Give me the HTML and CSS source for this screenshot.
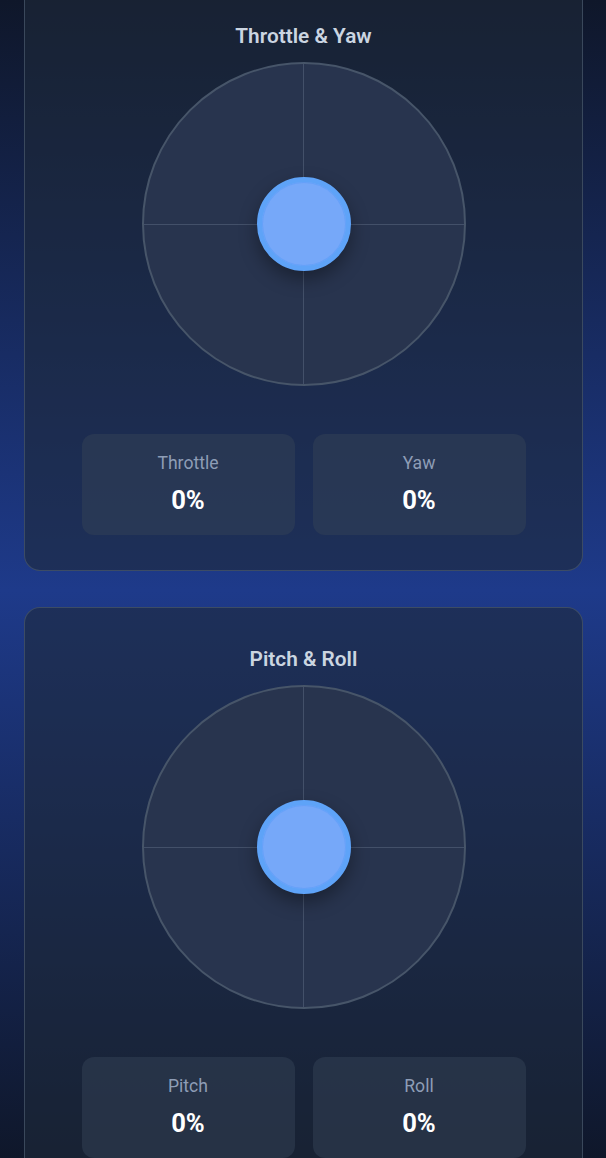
FILE: index.html
```html
<!DOCTYPE html>
<html lang="en">
<head>
<meta charset="utf-8">
<title>Joystick Control</title>
<link rel="stylesheet" href="styles.css">
</head>
<body>
<main class="page">
  <section class="card">
    <h2 class="card-title">Throttle &amp; Yaw</h2>
    <div class="pad">
      <span class="axis axis-h"></span>
      <span class="axis axis-v"></span>
      <span class="knob"></span>
    </div>
    <div class="stats">
      <div class="stat"><div class="stat-label">Throttle</div><div class="stat-value">0%</div></div>
      <div class="stat"><div class="stat-label">Yaw</div><div class="stat-value">0%</div></div>
    </div>
  </section>
  <section class="card">
    <h2 class="card-title">Pitch &amp; Roll</h2>
    <div class="pad">
      <span class="axis axis-h"></span>
      <span class="axis axis-v"></span>
      <span class="knob"></span>
    </div>
    <div class="stats">
      <div class="stat"><div class="stat-label">Pitch</div><div class="stat-value">0%</div></div>
      <div class="stat"><div class="stat-label">Roll</div><div class="stat-value">0%</div></div>
    </div>
  </section>
</main>
</body>
</html>
```
FILE: styles.css
```css
html, body {
  margin: 0;
  padding: 0;
}
body {
  height: 1158px;
  overflow: hidden;
  font-family: Roboto, "Liberation Sans", sans-serif;
  background: linear-gradient(180deg, #0f172a 0%, #1e3a8a 51%, #0f172a 100%);
  background-attachment: fixed;
}
.page {
  display: flex;
  flex-direction: column;
  gap: 36px;
  padding: 0 23px 0 24px;
  margin-top: -16px;
}
.card {
  box-sizing: border-box;
  height: 587px;
  border: 1px solid rgba(71, 85, 105, 0.75);
  border-radius: 16px;
  background: rgba(30, 41, 59, 0.6);
  padding: 37px 0 36px;
  display: flex;
  flex-direction: column;
  align-items: center;
}
.card-title {
  margin: 0 0 12px;
  font-size: 20.8px;
  line-height: 28px;
  font-weight: 600;
  color: #cbd5e1;
  text-align: center;
}
.pad {
  position: relative;
  box-sizing: border-box;
  width: 324px;
  height: 324px;
  border-radius: 50%;
  border: 2px solid #475569;
  background: #28344e;
  flex: none;
}
.axis {
  position: absolute;
  background: rgba(100, 116, 139, 0.45);
}
.axis-h {
  left: 0;
  right: 0;
  top: 50%;
  height: 1px;
  margin-top: -0.5px;
}
.axis-v {
  top: 0;
  bottom: 0;
  left: 50%;
  width: 1px;
  margin-left: -0.5px;
}
.knob {
  position: absolute;
  box-sizing: border-box;
  left: 50%;
  top: 50%;
  width: 94px;
  height: 94px;
  margin: -47px 0 0 -47px;
  border-radius: 50%;
  border: 5px solid #5ea3f8;
  background: #76a8f9;
  box-shadow: inset 0 0 0 1px rgba(100, 160, 250, 0.9), 0 8px 18px rgba(0, 0, 0, 0.35);
}
.stats {
  margin-top: 48px;
  display: flex;
  gap: 18px;
}
.stat {
  box-sizing: border-box;
  width: 213px;
  height: 101px;
  padding: 17px 0 0;
  border-radius: 12px;
  background: rgba(51, 65, 85, 0.5);
  text-align: center;
}
.stat-label {
  font-size: 17.6px;
  line-height: 24px;
  color: #8e9db6;
}
.stat-value {
  margin-top: 9px;
  font-size: 25.6px;
  line-height: 32px;
  font-weight: 700;
  color: #ffffff;
}
```
